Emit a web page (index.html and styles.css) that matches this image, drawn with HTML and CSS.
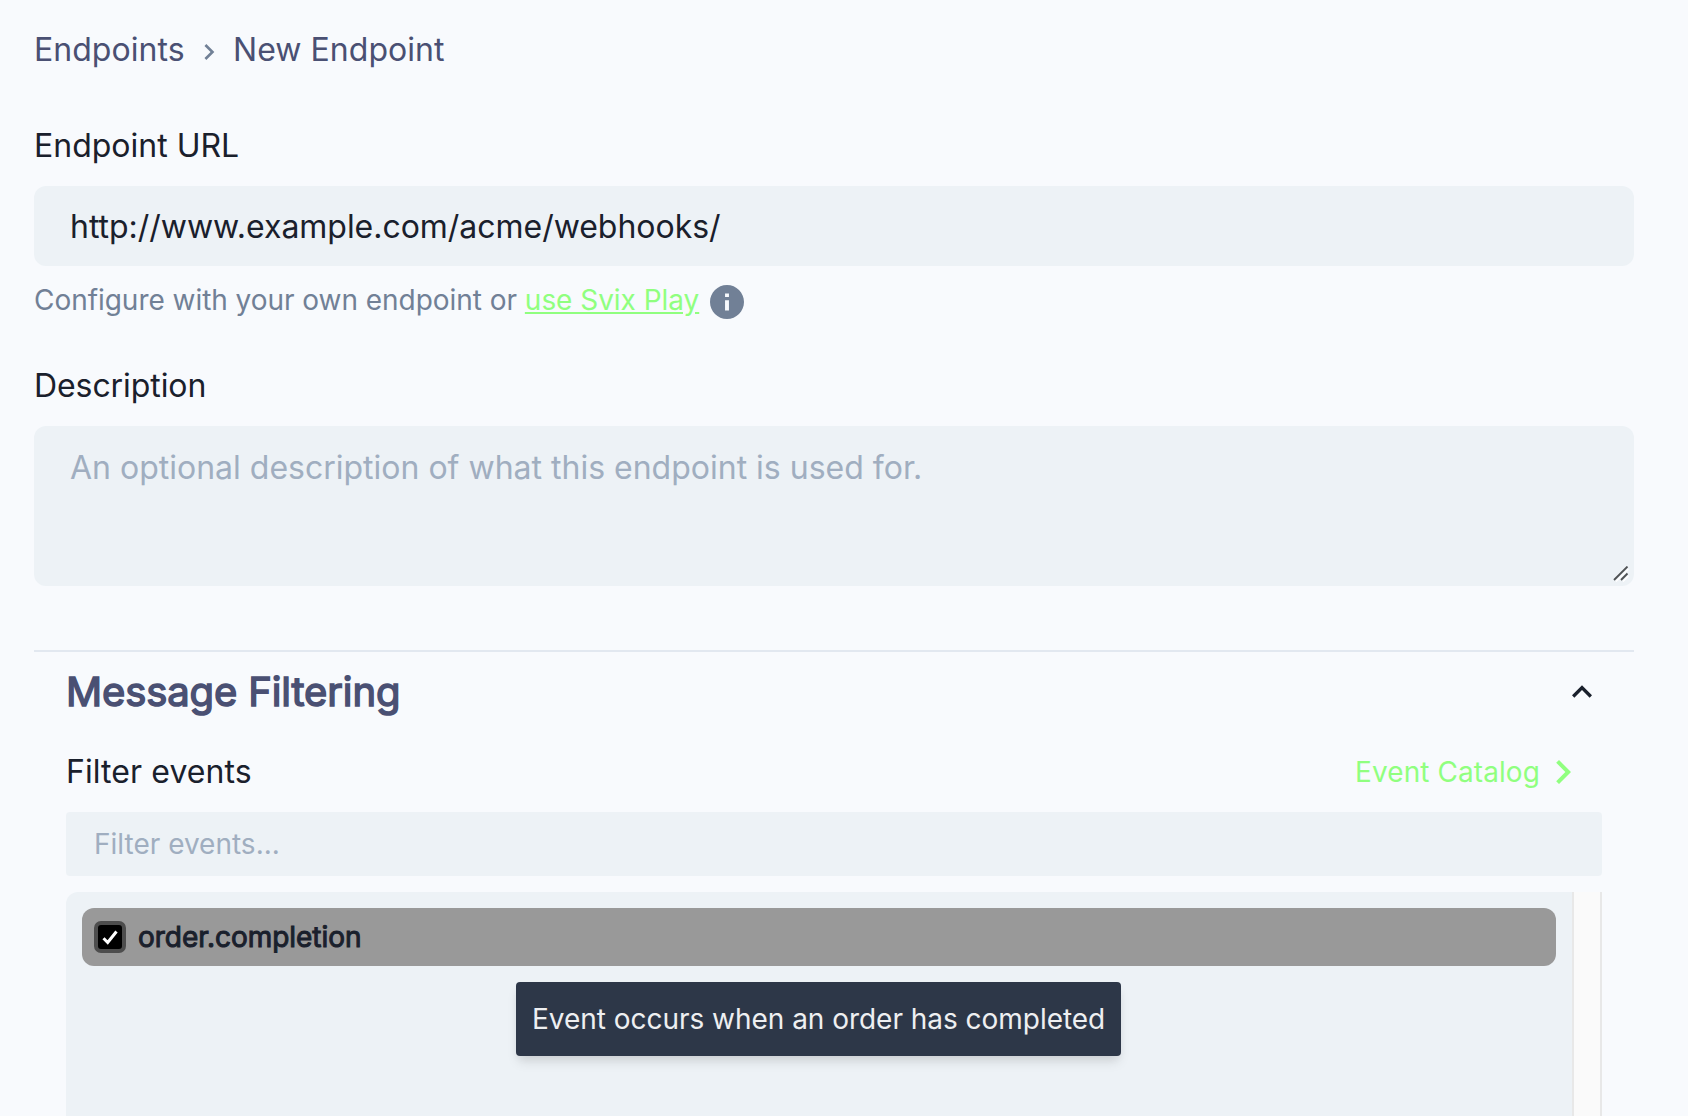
FILE: index.html
```html
<!DOCTYPE html>
<html lang="en">
<head>
<meta charset="utf-8">
<title>New Endpoint</title>
<link rel="stylesheet" href="styles.css">
</head>
<body>
<main class="page">
  <nav class="breadcrumb">
    <span class="crumb-first">Endpoints</span>
    <svg class="crumb-sep" viewBox="0 0 24 24"><path d="M10 6L8.59 7.41 13.17 12l-4.58 4.59L10 18l6-6z"/></svg>
    <span class="crumb-last">New Endpoint</span>
  </nav>

  <div class="field">
    <label class="label label-url" for="url">Endpoint URL</label>
    <input class="input" id="url" type="text" value="http://www.example.com/acme/webhooks/">
    <div class="helper">
      <span class="helper-text">Configure with your own endpoint or <a class="link">use Svix Play</a></span>
      <svg class="info" viewBox="2 2 20 20"><path d="M12 2C6.48 2 2 6.48 2 12s4.48 10 10 10 10-4.48 10-10S17.52 2 12 2zm1.15 15h-2.3v-6h2.3v6zm0-8h-2.3V7h2.3v2z"/></svg>
    </div>
  </div>

  <div class="field">
    <label class="label label-description" for="description">Description</label>
    <div class="textarea-wrap">
      <textarea class="textarea" id="description" placeholder="An optional description of what this endpoint is used for."></textarea>
      <svg class="grip" viewBox="0 0 16 16"><path class="grip-light" d="M3 15.5L15.5 3M10 15.5l5.5-5.5"/><path class="grip-dark" d="M1 14L14.5 .5M8 14l6.5-6.5"/></svg>
    </div>
  </div>

  <section class="filtering">
    <header class="section-head">
      <h2 class="section-title">Message Filtering</h2>
      <svg class="collapse" viewBox="0 0 24 24"><path d="M12 8l-6 6 1.41 1.41L12 10.83l4.59 4.58L18 14z"/></svg>
    </header>
    <div class="section-body">
      <div class="filter-head">
        <label class="label label-filter" for="filter">Filter events</label>
        <a class="catalog"><span class="catalog-text">Event Catalog</span><svg class="catalog-icon" viewBox="8 6 8 12"><path d="M10 6L8.59 7.41 13.17 12l-4.58 4.59L10 18l6-6z"/></svg></a>
      </div>
      <input class="filter-input" id="filter" type="text" placeholder="Filter events...">
      <div class="list">
        <div class="events">
          <div class="event">
            <span class="checkbox"><svg class="check" viewBox="0 0 24 24"><path d="M5.5 13.3l4.2 4.2L18.5 6.5"/></svg></span>
            <span class="event-name">order.completion</span>
            <div class="tooltip">Event occurs when an order has completed</div>
          </div>
        </div>
        <div class="scrollbar"></div>
      </div>
    </div>
  </section>
</main>
</body>
</html>
```

FILE: styles.css
```css
* { box-sizing: border-box; }

body {
  margin: 0;
  background: #f8fafd;
  color: #1a202c;
  font-family: Inter, "Liberation Sans", sans-serif;
  font-size: 32px;
  line-height: 48px;
}

.page {
  display: flex;
  flex-direction: column;
  height: 100vh;
  overflow: hidden;
  padding: 26px 54px 0 34px;
}

.breadcrumb {
  display: flex;
  align-items: center;
  height: 48px;
  margin-bottom: 48px;
  color: #4a5073;
  letter-spacing: .04px;
  white-space: nowrap;
}
.crumb-first { width: 150px; }
.crumb-sep {
  width: 32px;
  height: 32px;
  margin: 4px 8px 0 9px;
  fill: #718096;
}

.field { display: flex; flex-direction: column; }
.label { white-space: nowrap; }
.label-description { letter-spacing: -.08px; }
.label-filter { letter-spacing: .08px; }
.field .label { margin-bottom: 16px; align-self: flex-start; }

.input, .textarea, .filter-input {
  display: block;
  width: 100%;
  border: 0;
  outline: 0;
  background: #edf2f6;
  color: inherit;
  font: inherit;
}
.input {
  height: 80px;
  padding: 0 36px;
  border-radius: 12px;
  letter-spacing: -.03px;
}

.helper {
  display: flex;
  align-items: center;
  gap: 11px;
  height: 72px;
  margin-bottom: 24px;
  color: #718096;
  font-size: 28px;
  letter-spacing: -.04px;
}
.helper-text { padding-bottom: 4px; white-space: nowrap; }
.link { color: #90ff7f; text-decoration: underline; }
.info { width: 34px; height: 34px; fill: #718096; }

.textarea-wrap { position: relative; height: 160px; }
.textarea {
  height: 160px;
  padding: 18px 36px;
  border-radius: 12px;
  resize: none;
}
.textarea::placeholder, .filter-input::placeholder { color: #a0aec0; opacity: 1; }
.grip {
  position: absolute;
  right: 5px;
  bottom: 4px;
  width: 16px;
  height: 16px;
  fill: none;
}
.grip-dark { stroke: #4f5254; stroke-width: 1.8; }
.grip-light { stroke: #fff; stroke-width: 1.5; }

.filtering {
  display: flex;
  flex: 1;
  flex-direction: column;
  min-height: 0;
  margin-top: 64px;
  border-top: 2px solid #e2e8f0;
}
.section-head {
  display: flex;
  align-items: center;
  justify-content: space-between;
  height: 80px;
  padding: 0 32px;
}
.section-title {
  margin: 0;
  color: #4a5073;
  font-size: 40px;
  font-weight: 400;
  letter-spacing: -.12px;
  -webkit-text-stroke: 1.5px #4a5073;
}
.collapse { width: 40px; height: 40px; fill: #1a202c; }

.section-body {
  display: flex;
  flex: 1;
  flex-direction: column;
  min-height: 0;
  padding: 16px 32px 0;
}
.filter-head {
  display: flex;
  justify-content: space-between;
  height: 48px;
  margin-bottom: 16px;
}
.catalog {
  display: flex;
  align-items: center;
  gap: 15px;
  padding-right: 31px;
  color: #90ff7f;
  font-size: 28px;
  letter-spacing: .08px;
}
.catalog-icon { width: 16px; height: 24px; fill: #90ff7f; }

.filter-input {
  flex: none;
  height: 64px;
  margin-bottom: 16px;
  padding: 0 28px;
  border-radius: 4px;
  font-size: 28px;
}
.list {
  display: flex;
  flex: 1;
  min-height: 0;
  overflow: hidden;
  border-radius: 12px 0 0 0;
  background: #edf2f6;
}
.events { flex: 1; padding: 16px; }
.scrollbar {
  width: 30px;
  border: solid #e8e8e8;
  border-width: 0 2px;
  background: #fafafa;
}
.event {
  position: relative;
  display: flex;
  align-items: center;
  gap: 12px;
  height: 58px;
  padding: 0 12px;
  border-radius: 12px;
  background: #999;
}
.checkbox {
  width: 32px;
  height: 32px;
  border: 4px solid #4d4d4d;
  border-radius: 7px;
  background: #000;
}
.check {
  display: block;
  width: 24px;
  height: 24px;
  fill: none;
  stroke: #fff;
  stroke-width: 3;
}
.event-name {
  font-size: 28px;
  letter-spacing: -.04px;
  -webkit-text-stroke: 1px #1a202c;
}
.tooltip {
  position: absolute;
  top: 74px;
  left: 434px;
  width: 605px;
  height: 74px;
  padding: 0 16px;
  border-radius: 4px;
  background: #2d3748;
  box-shadow: 0 8px 12px -2px rgba(0, 0, 0, .1), 0 4px 8px -2px rgba(0, 0, 0, .06);
  color: #eeeff1;
  font-size: 28px;
  letter-spacing: -.03px;
  line-height: 74px;
  white-space: nowrap;
}
```
